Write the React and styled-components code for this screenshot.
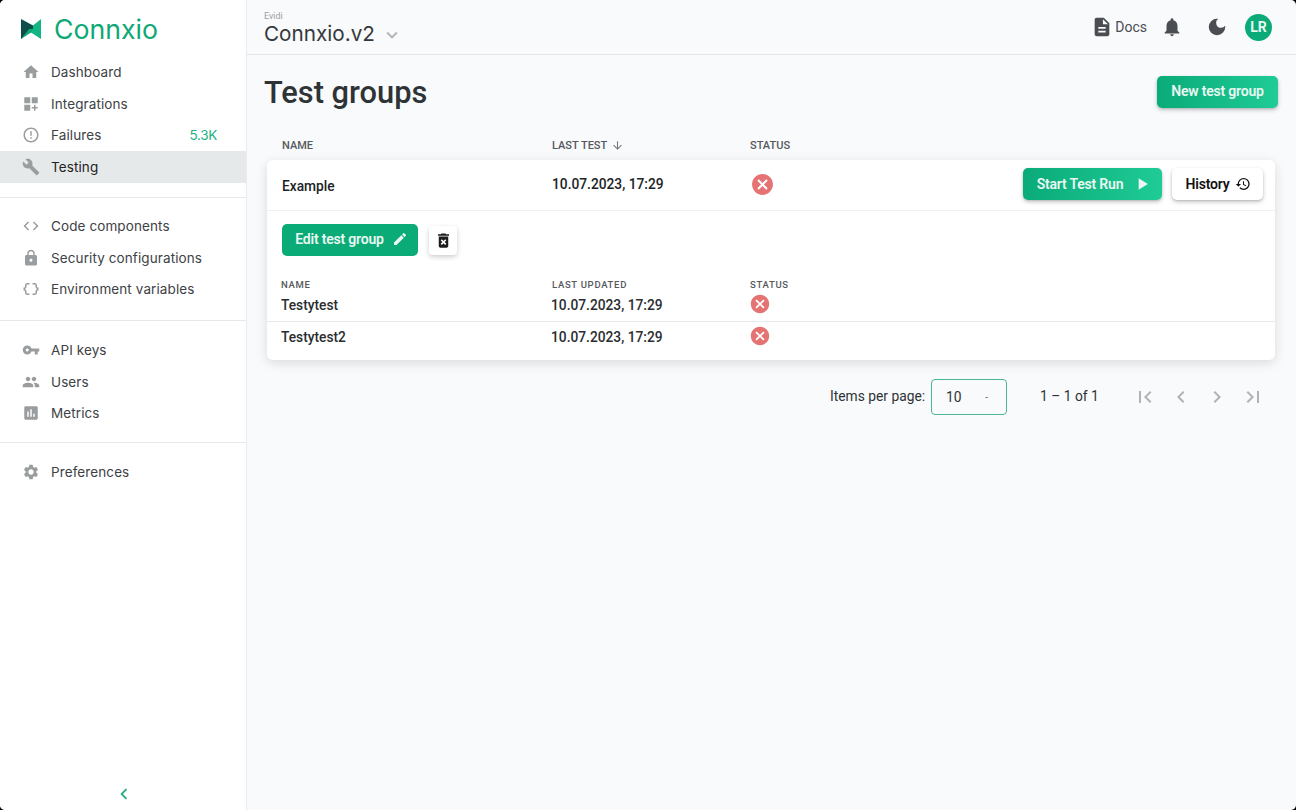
import React from "react";
import styled, { createGlobalStyle } from "styled-components";
import {
  MdHome,
  MdDashboardCustomize,
  MdErrorOutline,
  MdBuild,
  MdCode,
  MdLock,
  MdDataObject,
  MdVpnKey,
  MdPeople,
  MdAssessment,
  MdSettings,
  MdDescription,
  MdNotifications,
  MdDarkMode,
  MdExpandMore,
  MdPlayArrow,
  MdHistory,
  MdEdit,
  MdDeleteForever,
  MdCancel,
  MdArrowDownward,
  MdFirstPage,
  MdChevronLeft,
  MdChevronRight,
  MdLastPage,
} from "react-icons/md";

const GlobalStyle = createGlobalStyle`
  html, body {
    margin: 0;
    padding: 0;
    height: 100%;
    background: #000;
    overflow: hidden;
  }
  #root { height: 100%; }
  * { box-sizing: border-box; }
`;

const Shell = styled.div`
  display: flex;
  height: 810px;
  width: 1296px;
  background: #f9fafc;
  border-radius: 5px;
  overflow: hidden;
  font-family: Roboto, sans-serif;
  color: #2f3437;
`;

const Sidebar = styled.aside`
  width: 247px;
  flex: none;
  display: flex;
  flex-direction: column;
  background: #fff;
  border-right: 1px solid #e9ebed;
`;

const Brand = styled.div`
  display: flex;
  align-items: center;
  gap: 13px;
  height: 56.3px;
  padding: 2px 0 0 21px;
  font-family: Inter, sans-serif;
  font-size: 26.7px;
  font-weight: 400;
  color: #0fa877;
`;

const NavGroup = styled.nav`
  display: flex;
  flex-direction: column;
  padding: ${(p) => p.$pad || "13px 0"};
  border-bottom: ${(p) => (p.$last ? "none" : "1px solid #e6e8e9")};
`;

const NavItem = styled.div`
  display: flex;
  align-items: center;
  height: 31.6px;
  padding: 0 29px 0 22px;
  font-family: Inter, sans-serif;
  font-size: 13.5px;
  letter-spacing: 0.1px;
  color: ${(p) => (p.$active ? "#222" : "#3d4245")};
  background: ${(p) => (p.$active ? "#e6e9ea" : "transparent")};

  svg {
    font-size: 18px;
    color: #9a9d9f;
    margin-right: 11px;
    flex: none;
  }
`;

const Count = styled.span`
  margin-left: auto;
  letter-spacing: -0.3px;
  color: #27b085;
`;

const Collapse = styled.div`
  margin-top: auto;
  height: 27px;
  padding-left: 1px;
  display: flex;
  justify-content: center;
  color: #1fae83;
  font-size: 22px;
`;

const Main = styled.main`
  flex: 1;
  min-width: 0;
  display: flex;
  flex-direction: column;
`;

const Header = styled.header`
  height: 55px;
  flex: none;
  display: flex;
  align-items: center;
  padding: 0 24px 0 17px;
  border-bottom: 1px solid #e4e6e8;
`;

const Project = styled.div`
  display: flex;
  flex-direction: column;
  padding-top: 3px;
`;

const Org = styled.span`
  font-size: 9px;
  line-height: 11px;
  color: #9b9fa2;
`;

const ProjectRow = styled.div`
  display: flex;
  align-items: center;
  gap: 6px;
  font-family: Inter, sans-serif;
  font-size: 20.7px;
  line-height: 24px;
  color: #33383b;

  svg {
    font-size: 22px;
    color: #b2b5b7;
    margin-top: 2px;
  }
`;

const HeaderActions = styled.div`
  margin-left: auto;
  display: flex;
  align-items: center;
  color: #4a4e52;

  svg {
    font-size: 22px;
  }
`;

const DocsLink = styled.div`
  display: flex;
  align-items: center;
  gap: 2px;
  font-size: 14px;
  margin-right: 14px;
`;

const Avatar = styled.div`
  width: 27px;
  height: 27px;
  margin-left: 17px;
  border-radius: 50%;
  background: #0aab78;
  color: #e9f7f2;
  font-size: 14px;
  font-weight: 700;
  display: flex;
  align-items: center;
  justify-content: center;
`;

const BellSpacer = styled.span`
  display: flex;
  margin-right: 23px;
`;

const Content = styled.div`
  padding: 21px 18px 0 18px;
`;

const TitleRow = styled.div`
  display: flex;
  justify-content: space-between;
  align-items: flex-start;
  height: 54px;
`;

const Title = styled.h1`
  margin: 0 0 0 -1px;
  font-size: 30.8px;
  line-height: 34px;
  font-weight: 500;
  color: #2e3336;
`;

const Button = styled.button`
  display: inline-flex;
  align-items: center;
  justify-content: center;
  gap: ${(p) => p.$gap || "8px"};
  height: 32px;
  width: ${(p) => p.$width};
  padding: ${(p) => p.$pad || "0"};
  border: none;
  border-radius: 5px;
  font-family: Roboto, sans-serif;
  font-size: 14px;
  font-weight: 600;
  letter-spacing: -0.2px;
  color: ${(p) => (p.$white ? "#111" : "#eaf8f3")};
  background: ${(p) =>
    p.$white
      ? "#fff"
      : p.$flat
        ? "#0bab78"
        : "linear-gradient(90deg, #0aab78, #1fcb96)"};
  box-shadow: ${(p) =>
    p.$flat ? "none" : "0 2px 4px rgba(0, 0, 0, 0.22), 0 1px 2px rgba(0, 0, 0, 0.1)"};
`;

const Row = styled.div`
  display: grid;
  grid-template-columns: ${(p) => p.$cols || "270px 198px 1fr"};
  align-items: center;
  padding-left: ${(p) => p.$left || "15px"};
`;

const HeadRow = styled(Row)`
  height: 14px;
  margin: 8px 0 8px;
  padding-left: 17px;
  font-size: 11px;
  font-weight: 500;
  color: #55595c;
  width: 1010px;
`;

const SortLabel = styled.span`
  display: inline-flex;
  align-items: center;
  gap: 4px;

  svg {
    font-size: 13px;
    color: #777;
  }
`;

const Card = styled.section`
  width: 1008px;
  margin-left: 2px;
  background: #fff;
  border-radius: 6px;
  box-shadow: 0 3px 12px rgba(0, 0, 0, 0.13);
`;

const GroupRow = styled(Row)`
  height: 51px;
  padding-bottom: 1px;
  border-bottom: 1px solid #eff0f1;
  font-size: 13.75px;
  font-weight: 500;
  color: #202326;
  padding-right: 12px;
`;

const GroupName = styled.span`
  padding-top: 2px;
`;

const GroupDate = styled.span`
  padding-bottom: 2px;
`;

const GroupActions = styled.div`
  display: flex;
  justify-content: flex-end;
  gap: 10px;
  margin-top: -1px;
`;

const StatusIcon = styled(MdCancel)`
  color: #e57373;
  font-size: ${(p) => p.$size || "25px"};
  margin: ${(p) => p.$margin || "0"};
  display: block;
`;

const Details = styled.div`
  padding-top: 13px;
`;

const EditBar = styled.div`
  display: flex;
  align-items: center;
  gap: 11px;
  padding-left: 15px;
  margin-bottom: 22px;
`;

const IconButton = styled.button`
  width: 28px;
  height: 29px;
  border: none;
  padding: 0;
  margin-top: 1px;
  border-radius: 4px;
  background: #fff;
  color: #1c1c1c;
  font-size: 19px;
  display: flex;
  align-items: center;
  justify-content: center;
  box-shadow: 0 2px 5px rgba(0, 0, 0, 0.2);
`;

const SubHead = styled(Row)`
  height: 12px;
  font-size: 9.5px;
  font-weight: 500;
  letter-spacing: 0.7px;
  color: #55595c;
`;

const SubRow = styled(Row)`
  height: ${(p) => p.$h || "32px"};
  font-size: 13.75px;
  font-weight: 500;
  color: #2a2d30;
  border-bottom: ${(p) => (p.$line ? "1px solid #e9eaeb" : "none")};
  padding-bottom: ${(p) => p.$pb || "0"};
`;

const Paginator = styled.div`
  display: flex;
  align-items: center;
  height: 36px;
  margin: 19px 0 0 0;
  padding-left: 565px;
  font-size: 13.8px;
  color: #2e3235;
`;

const PagerLabel = styled.span`
  padding-bottom: 2px;
`;

const PageSelect = styled.div`
  width: 76px;
  height: 36px;
  margin-left: 6px;
  padding: 0 18px 0 14px;
  display: flex;
  align-items: center;
  justify-content: space-between;
  border: 1px solid #4db597;
  border-radius: 4px;
`;

const Caret = styled.span`
  font-size: 10px;
  color: #666;
`;

const RangeLabel = styled(PagerLabel)`
  margin-left: 33px;
  width: 91px;
`;

const PagerIcons = styled.div`
  display: flex;
  gap: 12px;
  margin-left: 2px;
  color: #b0b3b5;

  svg {
    font-size: 24px;
    display: block;
  }
`;

const LogoMark = () => (
  <svg width="20" height="20" viewBox="0 0 20 20">
    <path d="M20 0 L20 20 L10 13.5 L10 10 L12 6.5 Z" fill="#12b584" />
    <path d="M0 10 L12 10 L10 13.5 L0 20 Z" fill="#0fa877" />
    <path d="M0 0 L12 6.5 L12 10 L0 10 Z" fill="#0e4f4b" />
    <path d="M0 20 L0 10 L8 10 Z" fill="#0e4f4b" />
  </svg>
);

const Nav = ({ icon: Icon, label, active, count }) => (
  <NavItem $active={active}>
    <Icon />
    {label}
    {count && <Count>{count}</Count>}
  </NavItem>
);

export default function App() {
  return (
    <>
      <GlobalStyle />
      <Shell>
        <Sidebar>
          <Brand>
            <LogoMark />
            Connxio
          </Brand>
          <NavGroup $pad="0 0 14.7px">
            <Nav icon={MdHome} label="Dashboard" />
            <Nav icon={MdDashboardCustomize} label="Integrations" />
            <Nav icon={MdErrorOutline} label="Failures" count="5.3K" />
            <Nav icon={MdBuild} label="Testing" active />
          </NavGroup>
          <NavGroup $pad="12px 0 15px">
            <Nav icon={MdCode} label="Code components" />
            <Nav icon={MdLock} label="Security configurations" />
            <Nav icon={MdDataObject} label="Environment variables" />
          </NavGroup>
          <NavGroup>
            <Nav icon={MdVpnKey} label="API keys" />
            <Nav icon={MdPeople} label="Users" />
            <Nav icon={MdAssessment} label="Metrics" />
          </NavGroup>
          <NavGroup $last>
            <Nav icon={MdSettings} label="Preferences" />
          </NavGroup>
          <Collapse>
            <MdChevronLeft />
          </Collapse>
        </Sidebar>
        <Main>
          <Header>
            <Project>
              <Org>Evidi</Org>
              <ProjectRow>
                Connxio.v2
                <MdExpandMore />
              </ProjectRow>
            </Project>
            <HeaderActions>
              <DocsLink>
                <MdDescription />
                Docs
              </DocsLink>
              <BellSpacer>
                <MdNotifications />
              </BellSpacer>
              <MdDarkMode />
              <Avatar>LR</Avatar>
            </HeaderActions>
          </Header>
          <Content>
            <TitleRow>
              <Title>Test groups</Title>
              <Button $width="121px" $pad="0 0 2px">New test group</Button>
            </TitleRow>
            <HeadRow>
              <span>NAME</span>
              <SortLabel>
                LAST TEST
                <MdArrowDownward />
              </SortLabel>
              <span>STATUS</span>
            </HeadRow>
            <Card>
              <GroupRow>
                <GroupName>Example</GroupName>
                <GroupDate>10.07.2023, 17:29</GroupDate>
                <Row $cols="1fr auto" $left="0">
                  <StatusIcon />
                  <GroupActions>
                    <Button $width="139px" $gap="9px" $pad="0 0 0 4px">
                      Start Test Run
                      <MdPlayArrow size={20} />
                    </Button>
                    <Button $white $width="91px" $gap="6px" $pad="0 0 0 2px">
                      History
                      <MdHistory size={16} />
                    </Button>
                  </GroupActions>
                </Row>
              </GroupRow>
              <Details>
                <EditBar>
                  <Button $flat $width="136px" $pad="0 0 2px 3px">
                    Edit test group
                    <MdEdit size={16} />
                  </Button>
                  <IconButton>
                    <MdDeleteForever />
                  </IconButton>
                </EditBar>
                <SubHead $left="14px" $cols="271px 198px 1fr">
                  <span>NAME</span>
                  <span>LAST UPDATED</span>
                  <span>STATUS</span>
                </SubHead>
                <SubRow $left="14px" $cols="270px 199px 1fr" $h="32px" $line $pb="1px">
                  <span>Testytest</span>
                  <span>10.07.2023, 17:29</span>
                  <StatusIcon $size="22px" $margin="-2px 0 0 -1px" />
                </SubRow>
                <SubRow $left="14px" $cols="270px 199px 1fr" $h="38px" $pb="8px">
                  <span>Testytest2</span>
                  <span>10.07.2023, 17:29</span>
                  <StatusIcon $size="22px" $margin="-2px 0 0 -1px" />
                </SubRow>
              </Details>
            </Card>
            <Paginator>
              <PagerLabel>Items per page:</PagerLabel>
              <PageSelect>
                10
                <Caret>-</Caret>
              </PageSelect>
              <RangeLabel>1 – 1 of 1</RangeLabel>
              <PagerIcons>
                <MdFirstPage />
                <MdChevronLeft />
                <MdChevronRight />
                <MdLastPage />
              </PagerIcons>
            </Paginator>
          </Content>
        </Main>
      </Shell>
    </>
  );
}
